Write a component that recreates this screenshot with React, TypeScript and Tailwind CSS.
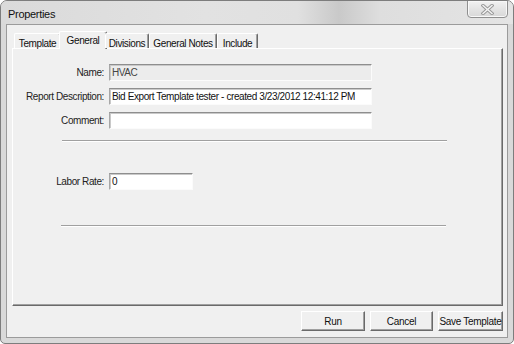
import React from "react";

const tabs = [
  { label: "Template", w: "w-[47px]" },
  { label: "General", w: "w-[48px]", active: true },
  { label: "Divisions", w: "w-[44px]" },
  { label: "General Notes", w: "w-[68px]" },
  { label: "Include", w: "w-[41px]" },
];

function TextBox({ value, width, readOnly }: { value: string; width: string; readOnly?: boolean }) {
  return (
    <div
      className={`${width} h-[17px] border border-t-[#8e8e8e] border-l-[#a7a7a7] border-r-[#fbfbfb] border-b-[#fbfbfb] shadow-[inset_1px_1px_0_#c9c9c9] ${
        readOnly ? "bg-[#ececec] text-[#444]" : "bg-white text-[#111]"
      } flex items-center pl-[2px] text-[10px] tracking-[-0.4px] leading-none`}
    >
      {value}
    </div>
  );
}

function Row({ label, children }: { label: string; children: React.ReactNode }) {
  return (
    <div className="flex items-center h-[17px]">
      <div className="w-[91px] text-right text-[10px] tracking-[-0.4px] text-[#222] leading-none">{label}</div>
      <div className="ml-[5px]">{children}</div>
    </div>
  );
}

function Separator({ left, width }: { left: string; width: string }) {
  return <div className={`${left} ${width} h-[2px] border-t border-[#a0a0a0] border-b border-b-white`} />;
}

function Btn({ label, width }: { label: string; width: string }) {
  return (
    <div
      className={`${width} h-[20px] flex items-center justify-center bg-[#f0f0f0] border border-t-white border-l-white border-r-[#6a6a6a] border-b-[#6a6a6a] shadow-[inset_-1px_-1px_0_#a0a0a0] text-[10px] tracking-[-0.3px] text-[#111]`}
    >
      {label}
    </div>
  );
}

export default function App() {
  return (
    <div className="w-[514px] h-[344px] flex flex-col rounded-t-[7px] rounded-b-[5px] border border-[#7d7d7d] bg-[#d9d9d9] font-['Liberation_Sans',Arial,sans-serif] overflow-hidden">
      {/* title bar */}
      <div className="h-[23px] flex justify-between bg-[linear-gradient(90deg,#dadada_0%,#e2e2e2_40%,#e0e0e0_58%,#c9c9c9_66%,#dedede_74%,#e4e4e4_100%)]">
        <div className="pl-[7px] pt-[5px] text-[11px] tracking-[-0.3px] text-[#111]">Properties</div>
        <div className="mr-[5px] w-[41px] h-[18px] -mt-px rounded-b-[4px] border border-[#8f8f8f] bg-[linear-gradient(180deg,#f2f2f2,#e4e4e4_50%,#d8d8d8)] flex items-center justify-center shadow-[inset_0_0_0_1px_#f8f8f8]">
          <svg width="13" height="11" viewBox="0 0 13 11">
            <path d="M2 1.5 L11 9.5 M11 1.5 L2 9.5" stroke="#9a9a9a" strokeWidth="3.4" strokeLinecap="square" />
            <path d="M2 1.5 L11 9.5 M11 1.5 L2 9.5" stroke="#f4f4f4" strokeWidth="1.4" strokeLinecap="square" />
          </svg>
        </div>
      </div>

      {/* client */}
      <div className="flex-1 mx-[5px] mb-[5px] border border-[#9b9b9b] bg-[#f0f0f0] flex flex-col pl-[5px] pr-[4px] pt-[4px]">
        <div className="flex pl-[2px] h-[19px] items-end relative z-10">
          {tabs.map((t) =>
            t.active ? (
              <div
                key={t.label}
                className={`${t.w} h-[18px] -mb-px -mx-[2px] bg-[#f0f0f0] border-l border-t border-white border-r border-r-[#6a6a6a] rounded-t-[2px] shadow-[inset_-1px_0_0_#a0a0a0] flex justify-center pt-[1px] text-[10px] tracking-[-0.4px] text-[#111]`}
              >
                {t.label}
              </div>
            ) : (
              <div
                key={t.label}
                className={`${t.w} h-[15px] bg-[#f0f0f0] border-l border-t border-white border-r border-r-[#6a6a6a] rounded-t-[2px] shadow-[inset_-1px_0_0_#a0a0a0] flex justify-center pt-[2px] text-[10px] tracking-[-0.4px] text-[#111]`}
              >
                {t.label}
              </div>
            )
          )}
        </div>

        {/* panel */}
        <div className="h-[258px] border border-t-white border-l-white border-r-[#6a6a6a] border-b-[#6a6a6a] shadow-[inset_-1px_-1px_0_#a0a0a0] flex flex-col pt-[15px]">
          <div className="flex flex-col gap-[7px]">
            <Row label="Name:">
              <TextBox value="HVAC" width="w-[263px]" readOnly />
            </Row>
            <Row label="Report Description:">
              <TextBox value="Bid Export Template tester - created 3/23/2012 12:41:12 PM" width="w-[263px]" />
            </Row>
            <Row label="Comment:">
              <TextBox value="" width="w-[263px]" />
            </Row>
          </div>
          <div className="mt-[11px] flex">
            <Separator left="ml-[49px]" width="w-[385px]" />
          </div>
          <div className="mt-[31px]">
            <Row label="Labor Rate:">
              <TextBox value="0" width="w-[84px]" />
            </Row>
          </div>
          <div className="mt-[35px] flex">
            <Separator left="ml-[48px]" width="w-[385px]" />
          </div>
        </div>

        <div className="flex justify-end gap-[5px] mt-[5px]">
          <Btn label="Run" width="w-[64px]" />
          <Btn label="Cancel" width="w-[63px]" />
          <Btn label="Save Template" width="w-[65px]" />
        </div>
      </div>
    </div>
  );
}
